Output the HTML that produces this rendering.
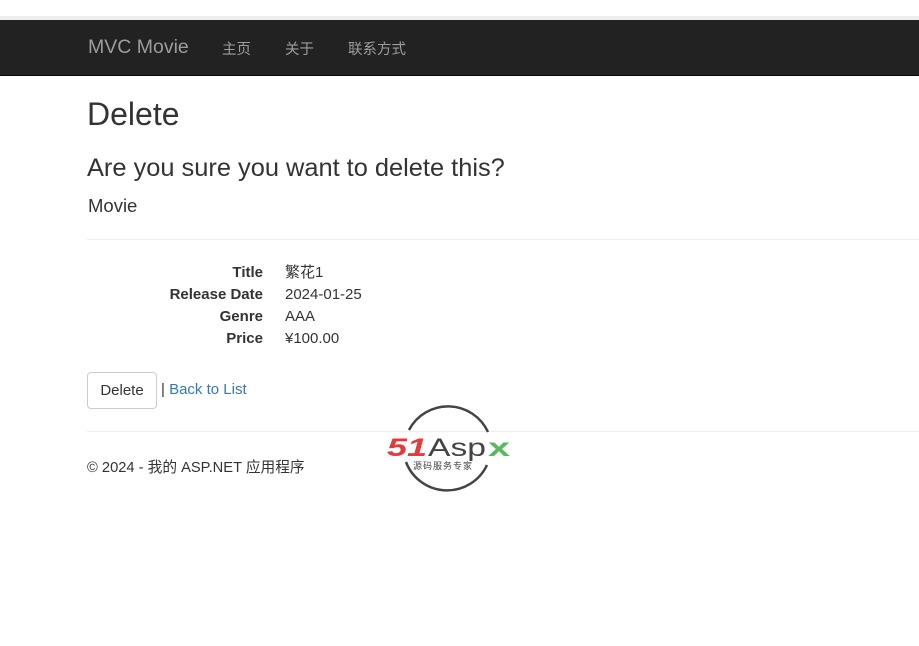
<!DOCTYPE html>
<html><head><meta charset="utf-8"><style>
*{margin:0;padding:0;box-sizing:border-box}
body{width:919px;height:646px;background:#fff;font-family:"Liberation Sans","Noto Sans CJK SC",sans-serif;color:#333;font-size:14px;position:relative;overflow:hidden}
.a{position:absolute;white-space:nowrap}
</style></head><body>
<div class="a" style="left:0;top:16px;width:919px;height:4px;background:#eee"></div>
<div class="a" style="left:0;top:20px;width:919px;height:56px;background:#222;border-bottom:1px solid #080808"></div>
<div class="a" style="left:88px;top:36px;font-size:19.5px;color:#9d9d9d">MVC Movie</div>
<div class="a" style="left:222px;top:38px;font-size:14.5px;color:#9d9d9d">主页</div>
<div class="a" style="left:285px;top:38px;font-size:14.5px;color:#9d9d9d">关于</div>
<div class="a" style="left:348px;top:38px;font-size:14.5px;color:#9d9d9d">联系方式</div>
<div class="a" style="left:87px;top:96px;font-size:32px">Delete</div>
<div class="a" style="left:87px;top:154px;font-size:25.4px">Are you sure you want to delete this?</div>
<div class="a" style="left:88px;top:195px;font-size:18.5px">Movie</div>
<div class="a" style="left:87px;top:239px;width:832px;height:1px;background:#eee"></div>
<div class="a" style="left:100px;top:262px;width:163px;text-align:right;font-weight:bold;line-height:22px;font-size:15px">Title<br>Release Date<br>Genre<br>Price</div>
<div class="a" style="left:285px;top:262px;line-height:22px;font-size:15px">繁花1<br>2024-01-25<br>AAA<br>¥100.00</div>
<div class="a" style="left:87px;top:372px;width:70px;height:37px;border:1px solid #ccc;border-radius:4px;text-align:center;line-height:35px;font-size:15px">Delete</div>
<div class="a" style="left:161px;top:381px;font-size:15px">| <span style="color:#337ab7">Back to List</span></div>
<div class="a" style="left:87px;top:431px;width:832px;height:1px;background:#eee"></div>
<div class="a" style="left:87px;top:456px;font-size:14.7px">© 2024 - 我的 ASP.NET 应用程序</div>
<svg class="a" style="left:380px;top:395px" width="140" height="105" viewBox="380 395 140 105">
<path d="M409 430 A44 44 0 0 1 488 432" fill="none" stroke="#444" stroke-width="2.5"/>
<path d="M487 465 A44 44 0 0 1 406 462" fill="none" stroke="#444" stroke-width="2.5"/>
<text x="387" y="456" font-family="Liberation Sans" font-weight="bold" font-style="italic" font-size="25" fill="#e53a3a" textLength="40" lengthAdjust="spacingAndGlyphs">51</text>
<text x="428" y="456" font-family="Liberation Sans" font-size="25" fill="#444" textLength="58" lengthAdjust="spacingAndGlyphs">Asp</text>
<text x="488" y="456" font-family="Liberation Sans" font-weight="bold" font-size="25" fill="#5cb85c" textLength="22" lengthAdjust="spacingAndGlyphs">x</text>
<text x="413" y="469" font-family="Noto Sans CJK SC" font-size="9" fill="#444" letter-spacing="1">源码服务专家</text>
</svg>
</body></html>
